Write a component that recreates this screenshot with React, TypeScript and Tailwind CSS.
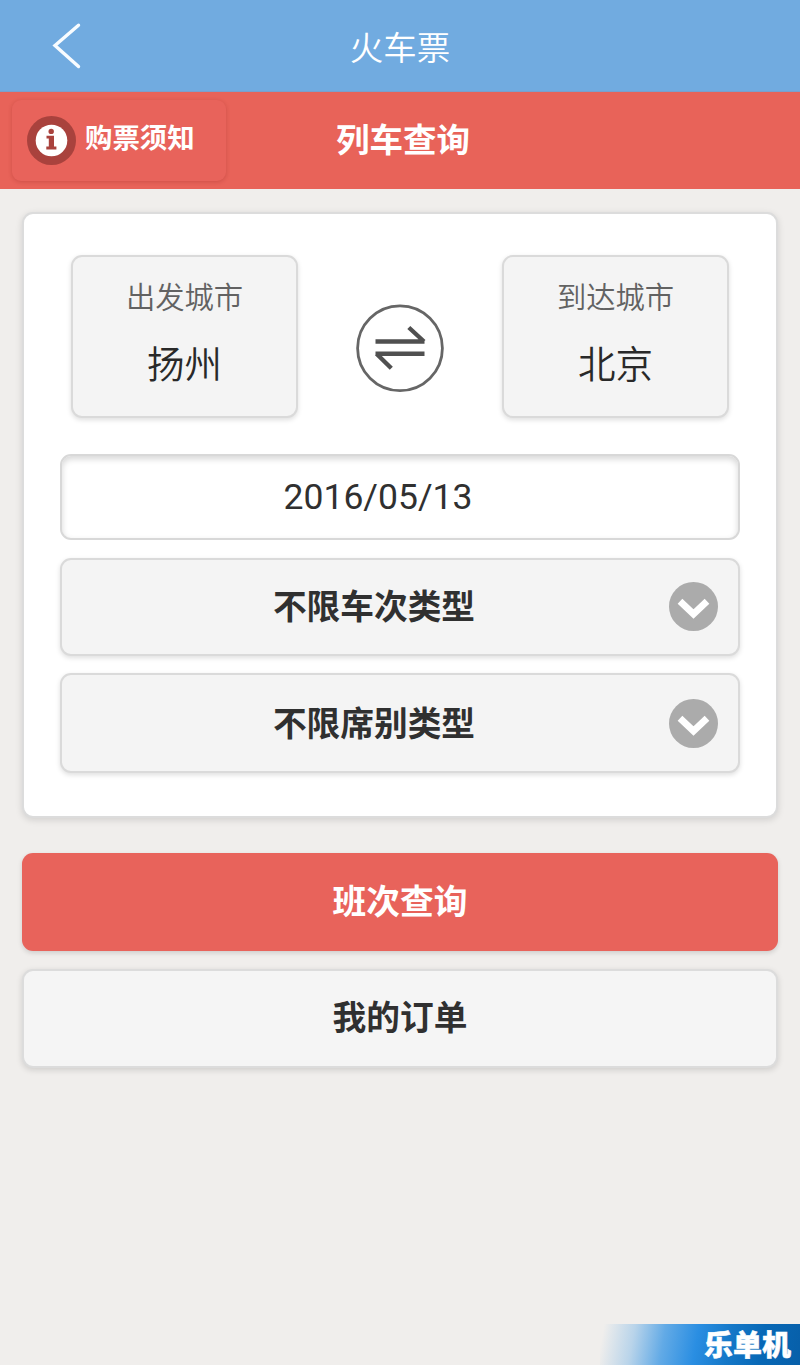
const cities = [
    { label: '出发城市', name: '扬州' },
    { label: '到达城市', name: '北京' },
];

const filters = [
    { text: '不限车次类型', box: 'h-[98px] mt-[18px] pb-[1px]' },
    { text: '不限席别类型', box: 'h-[100px] mt-[17px] pt-[1px]' },
];

const CityBox = ({ label, name }: { label: string; name: string }) => (
    <button className="w-[227px] h-[163px] flex flex-col items-center rounded-[11px] border-2 border-[#dadada] bg-[#f4f4f4] shadow-[0_2px_5px_rgba(0,0,0,0.13)]">
        <span className="mt-[17px] text-[29.3px] leading-[42px] font-[350] text-[#626262]">{label}</span>
        <span className="mt-[19px] text-[37.5px] leading-[54px] font-[350] text-[#292929]">{name}</span>
    </button>
);

const SwapIcon = () => (
    <svg className="w-[90px] h-[90px] mt-[48px]" viewBox="0 0 90 90" fill="none">
        <circle cx="45" cy="45.2" r="42.4" stroke="#666" strokeWidth="2.8" />
        <path d="M20.5 38.5H69.5M53.8 24.5L69 38.5M69.5 50.8H20.5M21.5 50.8L36.3 65.3" stroke="#505050" strokeWidth="4.4" />
    </svg>
);

const ChevronBadge = () => (
    <svg className="w-[49px] h-[49px] shrink-0" viewBox="0 0 49 49" fill="none">
        <circle cx="24.5" cy="24.5" r="24.5" fill="#ababab" />
        <path d="M11 19.2L24.5 32L38 19.2" stroke="#fff" strokeWidth="6.8" />
    </svg>
);

const InfoIcon = () => (
    <svg className="w-[49px] h-[49px] shrink-0" viewBox="0 0 49 49">
        <circle cx="24.5" cy="24.5" r="24.5" fill="#a9423d" />
        <circle cx="24.5" cy="24.5" r="15.8" fill="#fff" />
        <circle cx="24.2" cy="15.4" r="2.7" fill="#a9423d" />
        <path d="M19.5 19.8H27V30.6H29.4V33.4H19.3V30.6H21.8V22.5H19.5Z" fill="#a9423d" />
    </svg>
);

const App = () => {
    return (
        <div className="h-[1365px] w-full flex flex-col overflow-hidden bg-[#f0eeec] font-['Noto_Sans_CJK_SC',sans-serif] text-[#303030]">
            {/* Title bar */}
            <header className="h-[92px] shrink-0 grid grid-cols-3 items-center bg-[#71abe0] border-b border-[#7d9fca]">
                <svg className="w-[30px] h-[48px] ml-[51px]" viewBox="0 0 30 48" fill="none">
                    <path d="M27.5 3.2L4 23.5L27.5 44.5" stroke="#f8fcff" strokeWidth="3.4" strokeLinecap="round" />
                </svg>
                <h1 className="text-center text-[33.5px] leading-[48px] font-[350] text-white">火车票</h1>
            </header>

            {/* Section bar */}
            <div className="h-[97px] shrink-0 flex items-center bg-[#e86359] pb-[1px]">
                <button className="ml-[12px] w-[214px] h-[81px] flex items-center rounded-[9px] pl-[15px] bg-[#e8635b] shadow-[0_1px_4px_rgba(120,20,20,0.24)]">
                    <InfoIcon />
                    <span className="ml-[9px] -mt-[9px] text-[27.4px] leading-[40px] font-bold text-white">购票须知</span>
                </button>
                <h2 className="ml-[110px] -mt-[4px] text-[33.5px] leading-[48px] font-bold text-white">列车查询</h2>
            </div>

            <main className="flex flex-col px-[22px] pt-[23px]">
                <section className="h-[606px] flex flex-col rounded-[11px] border-2 border-[#dcdcdc] bg-white px-[36px] pt-[41px] shadow-[0_2px_7px_rgba(0,0,0,0.13)]">
                    <div className="flex justify-between pl-[11px] pr-[11px]">
                        <CityBox {...cities[0]} />
                        <SwapIcon />
                        <CityBox {...cities[1]} />
                    </div>

                    <div className="mt-[36px] h-[86px] flex items-center justify-center rounded-[11px] border-2 border-[#d8d8d8] bg-white pr-[44px] pt-[2px] font-[Roboto] text-[35.5px] shadow-[inset_0_3px_6px_rgba(0,0,0,0.16)]">
                        2016/05/13
                    </div>

                    {filters.map((filter) => (
                        <button
                            key={filter.text}
                            className={`${filter.box} shrink-0 flex items-center rounded-[11px] border-2 border-[#dadada] bg-[#f4f4f4] pr-[20px] shadow-[0_2px_5px_rgba(0,0,0,0.13)]`}
                        >
                            <span className="flex-1 pl-[17px] pb-[4px] text-center text-[33.7px] leading-[48px] font-bold">{filter.text}</span>
                            <ChevronBadge />
                        </button>
                    ))}
                </section>

                <button className="mt-[35px] h-[98px] rounded-[11px] bg-[#e8635b] pb-[4px] text-[33.7px] font-bold text-white shadow-[0_2px_5px_rgba(0,0,0,0.14)]">
                    班次查询
                </button>
                <button className="mt-[18px] h-[99px] rounded-[11px] border-2 border-[#dcdcdc] bg-[#f5f5f5] pb-[5px] text-[33.7px] font-bold shadow-[0_2px_6px_rgba(0,0,0,0.14)]">
                    我的订单
                </button>
            </main>

            {/* Site mark in the corner */}
            <footer className="mt-auto self-end w-[200px] h-[41px] flex items-center justify-end pr-[9px] pb-[3px] bg-[linear-gradient(100deg,#f0eeec_2%,#b9d4ea_17%,#62aae6_32%,#2a8ee2_48%,#1578c8_64%,#0868b6_80%,#075fa9_100%)]">
                <span className="text-[29px] leading-[40px] font-black text-white [-webkit-text-stroke:0.5px_white]">乐单机</span>
            </footer>
        </div>
    );
};

export default App;
